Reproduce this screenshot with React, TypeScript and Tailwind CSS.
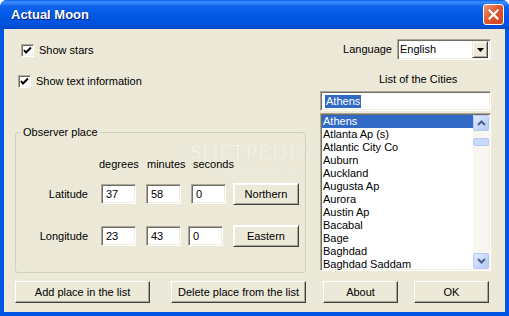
import React from 'react';

const cities = [
  'Athens',
  'Atlanta Ap (s)',
  'Atlantic City Co',
  'Auburn',
  'Auckland',
  'Augusta Ap',
  'Aurora',
  'Austin Ap',
  'Bacabal',
  'Bage',
  'Baghdad',
  'Baghdad Saddam',
];

// classic raised button
const Btn = ({ children, className = '' }: { children: React.ReactNode; className?: string }) => (
  <button
    className={
      'h-[22px] bg-[#ECE9D8] text-black text-[11px] leading-[13px] border border-t-white border-l-white border-r-[#404040] border-b-[#404040] shadow-[inset_-1px_-1px_0_#ACA899] flex items-center justify-center ' +
      className
    }
  >
    {children}
  </button>
);

// sunken text box
const Field = ({ value, className = '' }: { value: string; className?: string }) => (
  <div
    className={
      'h-[20px] bg-white border border-t-[#ACA899] border-l-[#ACA899] border-b-white border-r-white shadow-[inset_1px_1px_0_#716F64,inset_-1px_-1px_0_#F1EFE2] pl-[4px] flex items-center ' +
      className
    }
  >
    {value}
  </div>
);

const CheckBox = ({ label, className = '' }: { label: string; className?: string }) => (
  <div className={'flex items-center gap-[5px] h-[13px] ' + className}>
    <div className="w-[13px] h-[13px] bg-white border border-t-[#ACA899] border-l-[#ACA899] border-b-white border-r-white shadow-[inset_1px_1px_0_#716F64,inset_-1px_-1px_0_#F1EFE2] flex items-center justify-center">
      <svg width="9" height="9" viewBox="0 0 9 9">
        <polyline points="1,4 3,6.5 8,1.5" fill="none" stroke="#000" strokeWidth="2" />
      </svg>
    </div>
    <span>{label}</span>
  </div>
);

const ScrollArrow = ({ up }: { up?: boolean }) => (
  <div className="w-[16px] h-[16px] rounded-[2px] border border-[#B7CAF5] bg-[linear-gradient(135deg,#E1EAFE_0%,#C5D6FC_60%,#B3C8F7_100%)] flex items-center justify-center">
    <svg width="9" height="6" viewBox="0 0 9 6">
      {up ? (
        <polyline points="1,5 4.5,1.5 8,5" fill="none" stroke="#4D6185" strokeWidth="2" />
      ) : (
        <polyline points="1,1 4.5,4.5 8,1" fill="none" stroke="#4D6185" strokeWidth="2" />
      )}
    </svg>
  </div>
);

export default function App() {
  return (
    <div className="w-[509px] h-[316px] bg-[#0055E5] rounded-t-[7px] overflow-hidden flex flex-col font-['Liberation_Sans',sans-serif] text-[11px] leading-[13px] text-black">
      {/* title bar */}
      <div className="h-[29px] shrink-0 flex items-center justify-between bg-[linear-gradient(to_bottom,#0A5FE8_0%,#3D8FFF_7%,#0F63EC_22%,#0058E6_55%,#0052DD_85%,#0046C6_100%)]">
        <span className="pl-[11px] text-white font-bold text-[13px] [text-shadow:1px_1px_0_#0A1F7A]">Actual Moon</span>
        <div className="mr-[5px] w-[21px] h-[21px] rounded-[3px] border border-white bg-[linear-gradient(135deg,#F29677_0%,#E35A32_45%,#C8431E_100%)] flex items-center justify-center">
          <svg width="11" height="11" viewBox="0 0 11 11">
            <path d="M1.5 1.5 L9.5 9.5 M9.5 1.5 L1.5 9.5" stroke="#fff" strokeWidth="2.2" strokeLinecap="square" />
          </svg>
        </div>
      </div>

      {/* client area */}
      <div className="relative mx-[4px] mb-[4px] flex-1 bg-[#ECE9D8] pl-[11px] flex flex-col">
        {/* watermark */}
        <div className="pointer-events-none absolute left-[186px] top-[113px] flex flex-col items-center text-[#F3F1E8] [text-shadow:0_0_1px_#DEDACB]">
          <span className="font-['Liberation_Serif',serif] text-[21px] leading-[20px] tracking-[1px]">SOFTPEDIA</span>
          <span className="text-[9px] leading-[10px] mt-[4px] ml-[22px]">www.softpedia.com</span>
        </div>

        <div className="flex">
          {/* left column */}
          <div className="w-[291px] pt-[15px]">
            <CheckBox label="Show stars" className="ml-[6px]" />
            <CheckBox label="Show text information" className="ml-[3px] mt-[18px]" />

            <fieldset className="relative mt-[38px] h-[147px] border border-[#D0D0BF] rounded-[3px] p-0 m-0">
              <legend className="ml-[5px] px-[2px] leading-[13px]">Observer place</legend>
              <div className="flex mt-[19px] ml-[83px]">
                <span className="w-[48px]">degrees</span>
                <span className="w-[46px]">minutes</span>
                <span>seconds</span>
              </div>
              <div className="flex items-center mt-[12px]">
                <span className="w-[72px] text-right">Latitude</span>
                <Field value="37" className="w-[35px] ml-[13px]" />
                <Field value="58" className="w-[35px] ml-[10px]" />
                <Field value="0" className="w-[35px] ml-[10px]" />
                <Btn className="w-[66px] ml-[7px] border-t-[#404040] border-l-[#404040] shadow-[inset_1px_1px_0_#fff,inset_-1px_-1px_0_#ACA899]">Northern</Btn>
              </div>
              <div className="flex items-center mt-[20px]">
                <span className="w-[72px] text-right">Longitude</span>
                <Field value="23" className="w-[35px] ml-[13px]" />
                <Field value="43" className="w-[35px] ml-[10px]" />
                <Field value="0" className="w-[35px] ml-[7px]" />
                <Btn className="w-[66px] ml-[10px] border-t-[#404040] border-l-[#404040] shadow-[inset_1px_1px_0_#fff,inset_-1px_-1px_0_#ACA899]">Eastern</Btn>
              </div>
            </fieldset>
          </div>

          {/* right column */}
          <div className="ml-[14px] w-[171px] pt-[10px]">
            <div className="flex items-center justify-end gap-[5px]">
              <span>Language</span>
              <div className="w-[94px] h-[21px] bg-white border border-t-[#ACA899] border-l-[#ACA899] border-b-white border-r-white shadow-[inset_1px_1px_0_#716F64,inset_-1px_-1px_0_#F1EFE2] flex items-center pl-[2px] pr-[2px]">
                <span className="flex-1">English</span>
                <div className="w-[16px] h-[17px] bg-[#ECE9D8] border border-t-[#ECE9D8] border-l-[#ECE9D8] border-r-[#404040] border-b-[#404040] shadow-[inset_1px_1px_0_#fff,inset_-1px_-1px_0_#ACA899] flex items-center justify-center">
                  <svg width="7" height="4" viewBox="0 0 7 4">
                    <path d="M0 0 H7 L3.5 4 Z" fill="#000" />
                  </svg>
                </div>
              </div>
            </div>
            <div className="mt-[13px] pl-[59px]">List of the Cities</div>
            <Field value="" className="mt-[5px] w-[171px] !pl-[3px]" />
            <div className="relative -mt-[20px] h-[20px] flex items-center pl-[5px] pointer-events-none">
              <span className="bg-[#316AC5] text-white px-[1px]">Athens</span>
            </div>
            <div className="mt-[2px] h-[158px] bg-white border border-t-[#ACA899] border-l-[#ACA899] border-b-white border-r-white shadow-[inset_1px_1px_0_#716F64,inset_-1px_-1px_0_#F1EFE2] flex p-[1px]">
              <div className="flex-1 flex flex-col">
                {cities.map((c, i) => (
                  <div
                    key={c}
                    className={
                      'h-[13px] pl-[1px] leading-[13px] ' + (i === 0 ? 'bg-[#316AC5] text-white' : '')
                    }
                  >
                    {c}
                  </div>
                ))}
              </div>
              <div className="w-[16px] bg-[#F7F6F1] flex flex-col">
                <ScrollArrow up />
                <div className="flex-1 pt-[7px]">
                  <div className="h-[8px] rounded-[2px] border border-[#B7CAF5] bg-[#C9D8FC]" />
                </div>
                <ScrollArrow />
              </div>
            </div>
          </div>
        </div>

        {/* bottom buttons */}
        <div className="flex mt-[8px]">
          <Btn className="w-[135px]">Add place in the list</Btn>
          <Btn className="w-[135px] ml-[21px]">Delete place from the list</Btn>
          <Btn className="w-[75px] ml-[17px]">About</Btn>
          <Btn className="w-[75px] ml-[16px]">OK</Btn>
        </div>
      </div>
    </div>
  );
}
